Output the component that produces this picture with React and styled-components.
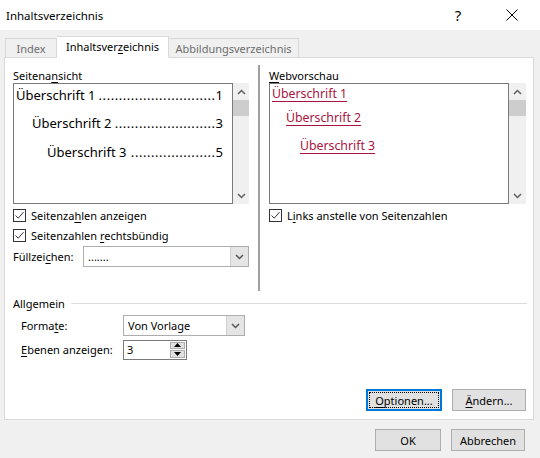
import React from "react";
import styled, { createGlobalStyle } from "styled-components";

const GlobalStyle = createGlobalStyle`
  html, body {
    margin: 0;
    padding: 0;
    background: #f0f0f0;
  }
  body {
    font-family: "Noto Sans", "Open Sans", sans-serif;
    font-size: 11px;
    color: #000;
  }
`;

const Window = styled.div`
  width: 540px;
  height: 458px;
  background: #f0f0f0;
  display: flex;
  flex-direction: column;
  overflow: hidden;
`;

const TitleBar = styled.div`
  height: 30px;
  background: #fff;
  display: flex;
  align-items: center;
  padding-left: 6px;
  font-size: 11.5px;
`;

const TitleText = styled.div`
  flex: 1;
`;

const HelpGlyph = styled.div`
  width: 14px;
  font-size: 15px;
  text-align: center;
  margin-right: 40px;
`;

const CloseGlyph = styled.div`
  width: 14px;
  height: 14px;
  margin-right: 21px;
  display: flex;
  align-items: center;
  justify-content: center;
`;

const Body = styled.div`
  padding: 7px 6px 0 4px;
  display: flex;
  flex-direction: column;
`;

const TabStrip = styled.div`
  display: flex;
  align-items: flex-end;
  height: 21px;
  padding-left: 1px;
  margin-bottom: -1px;
  position: relative;
  z-index: 1;
`;

const Tab = styled.div`
  box-sizing: border-box;
  height: ${(p) => (p.active ? "22px" : "19px")};
  margin-bottom: ${(p) => (p.active ? "0" : "1px")};
  width: ${(p) => p.width}px;
  display: flex;
  align-items: center;
  justify-content: center;
  padding-bottom: ${(p) => (p.active ? "2px" : "0")};
  border: 1px solid #d9d9d9;
  border-bottom: ${(p) => (p.active ? "1px solid #fff" : "none")};
  border-left: ${(p) => (p.noLeft ? "none" : "1px solid #d9d9d9")};
  background: ${(p) => (p.active ? "#fff" : "#f0f0f0")};
  color: ${(p) => (p.active ? "#000" : "#6d6d6d")};
  white-space: nowrap;
`;

const Panel = styled.div`
  box-sizing: border-box;
  width: 530px;
  height: 363px;
  background: #fff;
  border: 1px solid #d9d9d9;
  display: flex;
  flex-direction: column;
  padding: 7px 6px 0 8px;
`;

const TopGrid = styled.div`
  display: grid;
  grid-template-columns: 236px 1px 258px;
  column-gap: 9px;
  height: 226px;
`;

const Separator = styled.div`
  background: #a0a0a0;
  margin-right: -1px;
`;

const Column = styled.div`
  padding-top: 1px;
  display: flex;
  flex-direction: column;
  margin-left: ${(p) => (p.shift ? "1px" : "0")};
`;

const Label = styled.div`
  height: 16px;
  line-height: 19px;
  margin-bottom: 1px;
  white-space: nowrap;
`;

const Key = styled.span`
  text-decoration: underline;
  text-underline-offset: 2px;
`;

const ListRow = styled.div`
  display: flex;
  height: 121px;
`;

const ListBox = styled.div`
  box-sizing: border-box;
  flex: 1;
  border: 1px solid #7a7a7a;
  background: #fff;
  padding-top: 1px;
  overflow: hidden;
`;

const PreviewItem = styled.div`
  display: flex;
  align-items: center;
  height: 18px;
  margin-top: ${(p) => p.gap}px;
  padding-left: ${(p) => p.indent}px;
  padding-right: 9px;
  font-size: 13px;
  white-space: nowrap;
`;

const Leader = styled.span`
  flex: 1;
  text-align: right;
  letter-spacing: 0.55px;
`;

const LinkItem = styled.div`
  height: 18px;
  line-height: 18px;
  margin-top: ${(p) => p.gap}px;
  padding-left: ${(p) => p.indent}px;
  font-size: 12.3px;
  color: #a8123e;
  white-space: nowrap;

  span {
    text-decoration: underline;
    text-underline-offset: 3px;
  }
`;

const ScrollBar = styled.div`
  width: ${(p) => p.width}px;
  background: #f0f0f0;
  display: flex;
  flex-direction: column;
  align-items: stretch;
`;

const ScrollArrow = styled.div`
  height: 17px;
  display: flex;
  align-items: center;
  justify-content: center;
`;

const ScrollThumb = styled.div`
  height: 16px;
  background: #cdcdcd;
`;

const ScrollTrack = styled.div`
  flex: 1;
`;

const CheckRow = styled.div`
  display: flex;
  align-items: center;
  height: 20px;
  margin-top: ${(p) => (p.first ? "1px" : "0")};
  white-space: nowrap;
`;

const CheckBox = styled.div`
  box-sizing: border-box;
  width: 13px;
  height: 13px;
  border: 1px solid #333;
  background: #fff;
  margin-right: 5px;
  display: flex;
  align-items: center;
  justify-content: center;
`;

const FieldRow = styled.div`
  display: flex;
  align-items: center;
  height: 21px;
  margin-top: ${(p) => p.top}px;
  padding-left: ${(p) => p.indent || 0}px;
`;

const FieldLabel = styled.div`
  width: ${(p) => p.width}px;
  white-space: nowrap;
`;

const Combo = styled.div`
  box-sizing: border-box;
  width: ${(p) => p.width}px;
  height: ${(p) => p.height}px;
  border: 1px solid #adadad;
  background: #fff;
  display: flex;
  align-items: stretch;
`;

const ComboValue = styled.div`
  flex: 1;
  display: flex;
  align-items: center;
  padding-left: 4px;
`;

const ComboButton = styled.div`
  width: 17px;
  background: #e5e5e5;
  border-left: 1px solid #cfcfcf;
  display: flex;
  align-items: center;
  justify-content: center;
`;

const Spinner = styled.div`
  box-sizing: border-box;
  width: 64px;
  height: 20px;
  border: 1px solid #7a7a7a;
  background: #fff;
  display: flex;
`;

const SpinValue = styled.div`
  flex: 1;
  padding-left: 3px;
  display: flex;
  align-items: center;
`;

const SpinButtons = styled.div`
  width: 15px;
  margin: 1px 1px 1px 0;
  display: flex;
  flex-direction: column;
  gap: 1px;
`;

const SpinButton = styled.div`
  flex: 1;
  background: #e1e1e1;
  border: 1px solid #adadad;
  display: flex;
  align-items: center;
  justify-content: center;
`;

const GroupHeader = styled.div`
  display: flex;
  align-items: center;
  height: 16px;
  margin-top: 4px;
`;

const GroupLine = styled.div`
  flex: 1;
  height: 1px;
  background: #dcdcdc;
  margin-left: 6px;
`;

const ButtonRow = styled.div`
  display: flex;
  justify-content: flex-end;
  gap: ${(p) => p.gap}px;
  margin-top: auto;
  margin-bottom: ${(p) => p.bottom}px;
  padding-right: ${(p) => p.right}px;
`;

const Button = styled.div`
  box-sizing: border-box;
  width: ${(p) => p.width}px;
  height: 22px;
  background: #e1e1e1;
  border: ${(p) => (p.focused ? "2px solid #0078d7" : "1px solid #adadad")};
  display: flex;
  align-items: center;
  justify-content: center;
  padding: ${(p) => (p.focused ? "1px" : "2px")};
`;

const FocusRect = styled.div`
  flex: 1;
  align-self: stretch;
  display: flex;
  align-items: center;
  justify-content: center;
  outline: 1px dotted #000;
  outline-offset: -1px;
`;

const Footer = styled.div`
  display: flex;
  justify-content: flex-end;
  gap: 10px;
  margin-top: 9px;
  padding-right: 9px;
`;

const Check = () => (
  <svg width="11" height="11" viewBox="0 0 11 11">
    <path d="M1.5 5.5 L4.2 8.2 L9.5 2.2" fill="none" stroke="#333" strokeWidth="1" />
  </svg>
);

const Chevron = ({ up, color = "#606060" }) => (
  <svg width="9" height="6" viewBox="0 0 9 6">
    <path
      d={up ? "M1 5 L4.5 1.5 L8 5" : "M1 1 L4.5 4.5 L8 1"}
      fill="none"
      stroke={color}
      strokeWidth="1.5"
    />
  </svg>
);

const Triangle = ({ up }) => (
  <svg width="7" height="4" viewBox="0 0 7 4">
    <path d={up ? "M0 4 L3.5 0 L7 4 Z" : "M0 0 L3.5 4 L7 0 Z"} fill="#000" />
  </svg>
);

const ScrollBox = ({ width, children }) => (
  <ListRow>
    <ListBox>{children}</ListBox>
    <ScrollBar width={width}>
      <ScrollArrow>
        <Chevron up />
      </ScrollArrow>
      <ScrollThumb />
      <ScrollTrack />
      <ScrollArrow>
        <Chevron />
      </ScrollArrow>
    </ScrollBar>
  </ListRow>
);

const CheckOption = ({ first, children }) => (
  <CheckRow first={first}>
    <CheckBox>
      <Check />
    </CheckBox>
    <span>{children}</span>
  </CheckRow>
);

// dot count per row, sized to fit the leader space
const previewItems = [
  { level: 1, page: 1, indent: 2, gap: 1, dots: 29 },
  { level: 2, page: 3, indent: 18, gap: 10, dots: 25 },
  { level: 3, page: 5, indent: 33, gap: 11, dots: 21 },
];

const linkItems = [
  { level: 1, indent: 2, gap: 0 },
  { level: 2, indent: 16, gap: 6 },
  { level: 3, indent: 30, gap: 10 },
];

export default function App() {
  return (
    <>
      <GlobalStyle />
      <Window>
        <TitleBar>
          <TitleText>Inhaltsverzeichnis</TitleText>
          <HelpGlyph>?</HelpGlyph>
          <CloseGlyph>
            <svg width="12" height="12" viewBox="0 0 12 12">
              <path d="M0.5 0.5 L11.5 11.5 M11.5 0.5 L0.5 11.5" stroke="#000" strokeWidth="1" />
            </svg>
          </CloseGlyph>
        </TitleBar>

        <Body>
          <TabStrip>
            <Tab width={52}>Index</Tab>
            <Tab width={112} active noLeft>
              <span>
                Inhaltsver<Key>z</Key>eichnis
              </span>
            </Tab>
            <Tab width={130} noLeft>
              Abbildungsverzeichnis
            </Tab>
          </TabStrip>

          <Panel>
            <TopGrid>
              <Column>
                <Label>
                  Seitena<Key>n</Key>sicht
                </Label>
                <ScrollBox width={16}>
                  {previewItems.map((item) => (
                    <PreviewItem key={item.level} indent={item.indent} gap={item.gap}>
                      <span>Überschrift {item.level}</span>
                      <Leader>{".".repeat(item.dots)}</Leader>
                      <span>{item.page}</span>
                    </PreviewItem>
                  ))}
                </ScrollBox>
                <CheckOption first>
                  Seitenza<Key>h</Key>len anzeigen
                </CheckOption>
                <CheckOption>
                  Seitenzahlen <Key>r</Key>echtsbündig
                </CheckOption>
                <FieldRow top={1}>
                  <FieldLabel width={70}>
                    Füllzei<Key>c</Key>hen:
                  </FieldLabel>
                  <Combo width={166} height={21}>
                    <ComboValue>.......</ComboValue>
                    <ComboButton>
                      <Chevron color="#555" />
                    </ComboButton>
                  </Combo>
                </FieldRow>
              </Column>

              <Separator />

              <Column shift>
                <Label>
                  <Key>W</Key>ebvorschau
                </Label>
                <ScrollBox width={17}>
                  {linkItems.map((item) => (
                    <LinkItem key={item.level} indent={item.indent} gap={item.gap}>
                      <span>Überschrift {item.level}</span>
                    </LinkItem>
                  ))}
                </ScrollBox>
                <CheckOption first>
                  L<Key>i</Key>nks anstelle von Seitenzahlen
                </CheckOption>
              </Column>
            </TopGrid>

            <GroupHeader>
              Allgemein
              <GroupLine />
            </GroupHeader>

            <FieldRow top={4} indent={8}>
              <FieldLabel width={102}>
                Forma<Key>t</Key>e:
              </FieldLabel>
              <Combo width={122} height={21}>
                <ComboValue>Von Vorlage</ComboValue>
                <ComboButton>
                  <Chevron color="#555" />
                </ComboButton>
              </Combo>
            </FieldRow>

            <FieldRow top={3} indent={8}>
              <FieldLabel width={102}>
                <Key>E</Key>benen anzeigen:
              </FieldLabel>
              <Spinner>
                <SpinValue>3</SpinValue>
                <SpinButtons>
                  <SpinButton>
                    <Triangle up />
                  </SpinButton>
                  <SpinButton>
                    <Triangle />
                  </SpinButton>
                </SpinButtons>
              </Spinner>
            </FieldRow>

            <ButtonRow gap={10} bottom={8} right={1}>
              <Button width={76} focused>
                <FocusRect>
                  <span>
                    <Key>O</Key>ptionen...
                  </span>
                </FocusRect>
              </Button>
              <Button width={74}>
                <span>
                  <Key>Ä</Key>ndern...
                </span>
              </Button>
            </ButtonRow>
          </Panel>

          <Footer>
            <Button width={66}>OK</Button>
            <Button width={74}>Abbrechen</Button>
          </Footer>
        </Body>
      </Window>
    </>
  );
}
